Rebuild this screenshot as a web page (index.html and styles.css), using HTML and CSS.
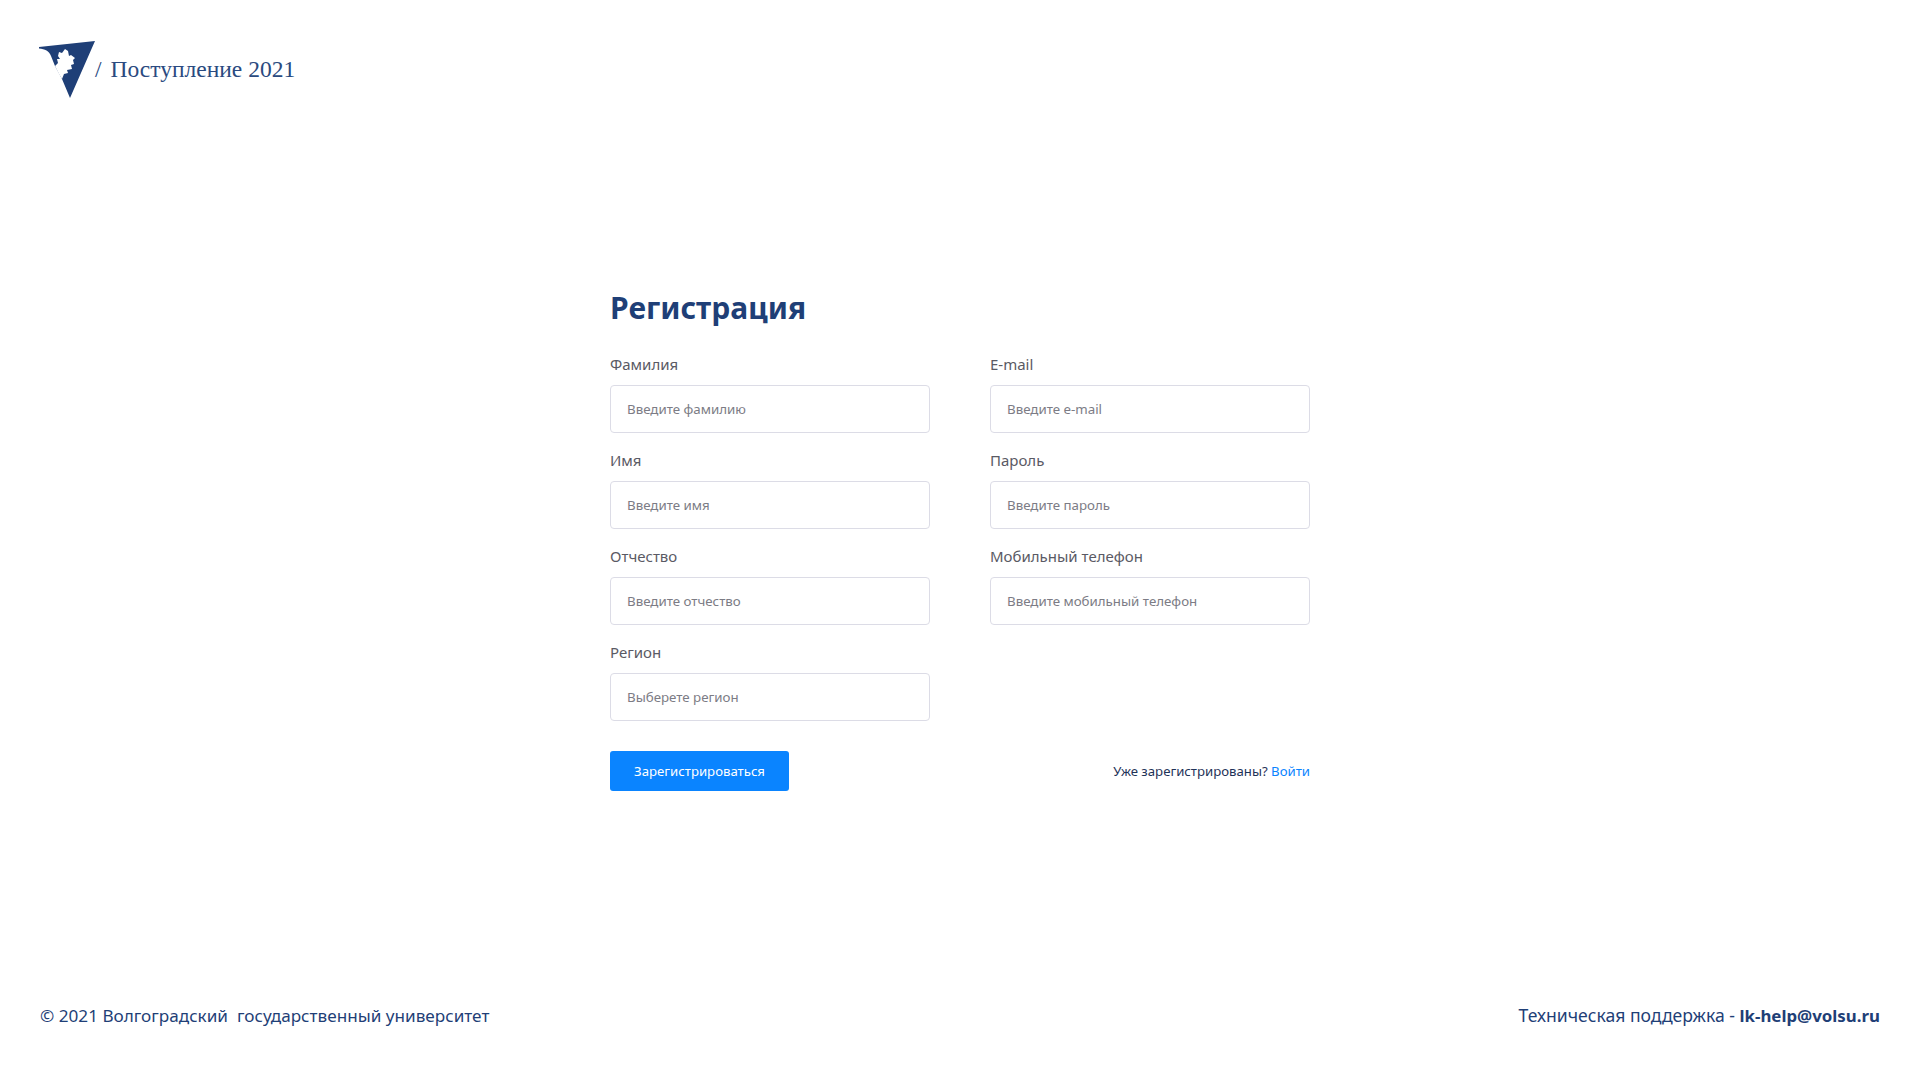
FILE: index.html
```html
<!DOCTYPE html>
<html lang="ru">

<head>
    <meta charset="UTF-8">
    <meta name="viewport" content="width=device-width, initial-scale=1.0">
    <title>Регистрация</title>
    <link rel="stylesheet" href="styles.css">
</head>

<body>
    <div class="page">
        <header class="top">
            <svg class="logo-mark" width="55" height="57" viewBox="0 0 55 57">
                <path fill="#1f3f77" d="M-1 6 L55 0 L30 57 L22 38 L15 25 L11 15 C9 10 5 8 -1 7.500 Z" />
                <path fill="#fff" d="M15 25 L19 33 L22 38 L24 33 L28 32 L27 29 L32 28 L31 24 L34 23 L33 19 L35 17 L31 14 L29 15 L28 10 L25 8 L22 12 L19 11 L18 15 L20 18 L17 18 L18 22 Z" />
            </svg>
            <span class="logo-text"><span class="logo-slash">/</span>Поступление 2021</span>
        </header>

        <main class="main">
            <form class="reg-form">
                <h1 class="form-title">Регистрация</h1>
                <div class="fields">
                    <div class="field">
                        <label class="field-label">Фамилия</label>
                        <input class="field-input" type="text" placeholder="Введите фамилию">
                    </div>
                    <div class="field">
                        <label class="field-label">E-mail</label>
                        <input class="field-input" type="text" placeholder="Введите e-mail">
                    </div>
                    <div class="field">
                        <label class="field-label">Имя</label>
                        <input class="field-input" type="text" placeholder="Введите имя">
                    </div>
                    <div class="field">
                        <label class="field-label">Пароль</label>
                        <input class="field-input" type="text" placeholder="Введите пароль">
                    </div>
                    <div class="field">
                        <label class="field-label">Отчество</label>
                        <input class="field-input" type="text" placeholder="Введите отчество">
                    </div>
                    <div class="field">
                        <label class="field-label">Мобильный телефон</label>
                        <input class="field-input" type="text" placeholder="Введите мобильный телефон">
                    </div>
                    <div class="field">
                        <label class="field-label">Регион</label>
                        <input class="field-input" type="text" placeholder="Выберете регион">
                    </div>
                </div>
                <div class="actions">
                    <button class="submit-btn" type="button">Зарегистрироваться</button>
                    <span class="login-note">Уже зарегистрированы? <a class="login-link" href="#">Войти</a></span>
                </div>
            </form>
        </main>

        <footer class="bottom">
            <span class="copy">© 2021 Волгоградский&nbsp; государственный университет</span>
            <span class="support">Техническая поддержка - <b class="help-mail">lk-help@volsu.ru</b></span>
        </footer>
    </div>
</body>

</html>
```

FILE: styles.css
```css
* {
    box-sizing: border-box;
}

body {
    margin: 0;
    background: #fff;
    font-family: "Noto Sans", "Open Sans", sans-serif;
}

.page {
    display: flex;
    flex-direction: column;
    height: 1080px;
    padding: 40px 40px 0 40px;
}

.top {
    display: flex;
    align-items: center;
    height: 58px;
}

.logo-mark {
    overflow: visible;
}

.logo-text {
    padding-top: 1px;
    font-family: "Liberation Serif", serif;
    font-size: 23.500px;
    color: #2a4a80;
}

.logo-slash {
    margin-right: 9px;
}

.main {
    display: flex;
    justify-content: center;
    height: 903px;
    padding-top: 190px;
}

.reg-form {
    width: 700px;
}

.form-title {
    margin: 0 0 25px 0;
    font-size: 30px;
    line-height: 40px;
    font-weight: 700;
    color: #1f3f77;
}

.fields {
    display: grid;
    grid-template-columns: 320px 320px;
    column-gap: 60px;
    row-gap: 16px;
}

.field {
    display: flex;
    flex-direction: column;
}

.field-label {
    height: 32px;
    font-size: 15px;
    line-height: 22px;
    color: #5a5a64;
}

.field-input {
    width: 100%;
    height: 48px;
    padding: 0 16px;
    border: 1px solid #dcdce6;
    border-radius: 4px;
    background: #fff;
    font-family: inherit;
    font-size: 13.300px;
    outline: none;
}

.field-input::placeholder {
    color: #7c7c85;
    opacity: 1;
}

.actions {
    display: flex;
    justify-content: space-between;
    align-items: center;
    margin-top: 30px;
}

.submit-btn {
    width: 179px;
    height: 40px;
    border: 0;
    border-radius: 3px;
    background: #0a84ff;
    color: #fff;
    font-family: inherit;
    font-size: 13.200px;
}

.login-note {
    font-size: 13.200px;
    color: #1f3358;
}

.login-link {
    color: #0a84ff;
    text-decoration: none;
}

.bottom {
    display: flex;
    justify-content: space-between;
    align-items: baseline;
    line-height: 28px;
    color: #1f3f77;
}

.copy {
    font-size: 17.150px;
}

.support {
    font-size: 17.600px;
}

.help-mail {
    font-size: 16.850px;
    font-weight: 700;
}
```
